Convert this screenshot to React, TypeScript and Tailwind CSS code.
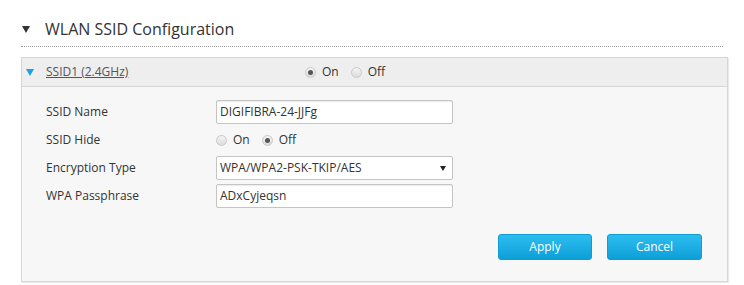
import React from "react";

const FONT = { fontFamily: '"Open Sans", "Noto Sans", sans-serif' };

function Radio({ checked, label }: { checked: boolean; label: string }) {
  return (
    <span className="inline-flex items-center">
      <span className="flex h-[11px] w-[11px] items-center justify-center rounded-full border border-[#c9c9c9] bg-gradient-to-b from-[#f4f4f4] to-[#dcdcdc]">
        {checked && <span className="h-[5px] w-[5px] rounded-full bg-[#555]" />}
      </span>
      <span className="ml-[6px] text-[12px] text-[#333]">{label}</span>
    </span>
  );
}

function Row({ label, children }: { label: string; children: React.ReactNode }) {
  return (
    <div className="flex h-[24px] items-center">
      <div className="w-[170px] text-[12px] text-[#333]">{label}</div>
      {children}
    </div>
  );
}

function TextBox({ value }: { value: string }) {
  return (
    <div className="flex h-[24px] w-[237px] items-center rounded-[2px] border border-[#c4c4c4] bg-white pl-[3px] text-[12px] text-[#333] shadow-[inset_0_1px_1px_rgba(0,0,0,0.08)]">
      {value}
    </div>
  );
}

function Tri({ color, w, h }: { color: string; w: number; h: number }) {
  return (
    <svg width={w} height={h} viewBox={`0 0 ${w} ${h}`}>
      <polygon points={`0,0 ${w},0 ${w / 2},${h}`} fill={color} />
    </svg>
  );
}

export default function App() {
  return (
    <div className="h-[285px] w-[744px] bg-white" style={FONT}>
      <div className="mx-[21px] flex h-[47px] flex-col">
        <div className="flex items-center pt-[19px]">
          <span className="ml-[1px] mt-[1px]">
            <Tri color="#333" w={8} h={7} />
          </span>
          <span className="ml-[15px] text-[16px] leading-[20px] text-[#333]">WLAN SSID Configuration</span>
        </div>
        <div className="mt-auto border-b border-dotted border-[#9a9a9a]" />
      </div>

      <div className="mx-[21px] mt-[10px] w-[707px] border border-[#d6d6d6] shadow-[1px_1px_1px_rgba(0,0,0,0.08)]">
        <div className="flex h-[29px] items-center border-b border-[#d6d6d6] bg-[#eeeeee]">
          <span className="ml-[4px] flex">
            <Tri color="#1aa3de" w={8} h={7} />
          </span>
          <span className="ml-[12px] w-[259px] text-[12px] text-[#555] underline">SSID1 (2.4GHz)</span>
          <div className="flex items-center gap-[12px]">
            <Radio checked label="On" />
            <Radio checked={false} label="Off" />
          </div>
        </div>

        <div className="bg-[#f7f7f7] px-[24px] pt-[13px] pb-[21px]">
          <div className="flex flex-col gap-[4px]">
            <Row label="SSID Name">
              <TextBox value="DIGIFIBRA-24-JJFg" />
            </Row>
            <Row label="SSID Hide">
              <div className="flex items-center gap-[12px]">
                <Radio checked={false} label="On" />
                <Radio checked label="Off" />
              </div>
            </Row>
            <Row label="Encryption Type">
              <div className="flex h-[24px] w-[237px] items-center justify-between rounded-[2px] border border-[#c4c4c4] bg-white pl-[3px] pr-[6px] text-[12px] text-[#333]">
                <span>WPA/WPA2-PSK-TKIP/AES</span>
                <span className="flex">
                  <Tri color="#222" w={6} h={5} />
                </span>
              </div>
            </Row>
            <Row label="WPA Passphrase">
              <TextBox value="ADxCyjeqsn" />
            </Row>
          </div>
          <div className="mt-[26px] flex justify-end gap-[15px] pr-[1px]">
            <button className="h-[26px] w-[94px] rounded-[3px] border border-[#0f9bd3] bg-gradient-to-b from-[#2cbdf0] to-[#0a9fd8] text-[12px] text-white">
              Apply
            </button>
            <button className="h-[26px] w-[95px] rounded-[3px] border border-[#0f9bd3] bg-gradient-to-b from-[#2cbdf0] to-[#0a9fd8] text-[12px] text-white">
              Cancel
            </button>
          </div>
        </div>
      </div>
    </div>
  );
}
